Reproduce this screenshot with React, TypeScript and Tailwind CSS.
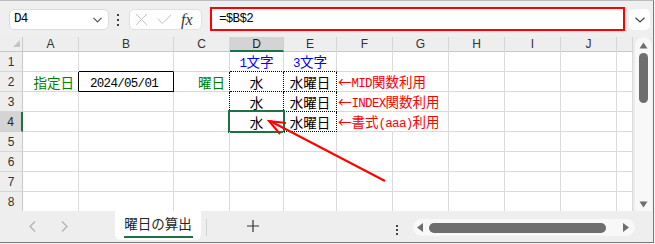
import React from "react";

const CJK = "font-['Noto_Sans_CJK_JP',sans-serif]";
const MONO = "font-['Liberation_Mono',monospace]";

function Rich({ s }: { s: string }) {
  const runs = s.match(/[\x00-\x7f]+|[^\x00-\x7f]+/g) || [];
  return (
    <>
      {runs.map((r, i) =>
        /^[\x00-\x7f]+$/.test(r) ? (
          <span key={i} className={`${MONO} text-[12.5px] tracking-[-0.7px]`}>
            {r}
          </span>
        ) : (
          <span key={i} className={`${CJK} text-[13.5px]`}>
            {r}
          </span>
        )
      )}
    </>
  );
}

const COLS = ["A", "B", "C", "D", "E", "F", "G", "H", "I", "J", ""];

type CellDef = { text: string; cls: string; align: string };

function cellContent(r: number, c: number): CellDef | null {
  const key = `${COLS[c]}${r}`;
  switch (key) {
    case "A2":
      return { text: "指定日", cls: "text-[#008000]", align: "justify-end pr-[4px]" };
    case "B2":
      return { text: "2024/05/01", cls: "text-black", align: "justify-center pr-[4px]" };
    case "C2":
      return { text: "曜日", cls: "text-[#008000]", align: "justify-end pr-[4px]" };
    case "D1":
      return { text: "1文字", cls: "text-[#0000ff]", align: "justify-center" };
    case "E1":
      return { text: "3文字", cls: "text-[#0000ff]", align: "justify-center" };
    case "D2":
    case "D3":
    case "D4":
      return { text: "水", cls: "text-black", align: "justify-center" };
    case "E2":
    case "E3":
    case "E4":
      return { text: "水曜日", cls: "text-black", align: "justify-center" };
    case "F2":
      return { text: "←MID関数利用", cls: "text-[#ff0000]", align: "justify-start pl-[1px]" };
    case "F3":
      return { text: "←INDEX関数利用", cls: "text-[#ff0000]", align: "justify-start pl-[1px]" };
    case "F4":
      return { text: "←書式(aaa)利用", cls: "text-[#ff0000]", align: "justify-start pl-[1px]" };
  }
  return null;
}

function borderCls(r: number, c: number): string {
  const key = `${COLS[c]}${r}`;
  if (["D2", "D3", "D4", "E2", "E3", "E4"].includes(key)) return "border-r border-b border-dotted border-black";
  if (key === "D1" || key === "E1") return "border-r border-b border-r-[#dadada] border-b-black [border-bottom-style:dotted]";
  if (key === "C2" || key === "C3" || key === "C4") return "border-r border-b border-r-black border-b-[#dadada] [border-right-style:dotted]";
  if (key === "F2" || key === "F3" || key === "F4") return "border-r border-b border-r-transparent border-b-[#dadada]";
  if (key === "A2") return "border-r border-b border-r-black border-b-[#dadada]";
  if (key === "B1") return "border-r border-b border-r-[#dadada] border-b-black";
  if (key === "B2") return "border-r border-b border-black";
  return "border-r border-b border-[#dadada]";
}

function Grid() {
  const rows = [1, 2, 3, 4, 5, 6, 7, 8];
  return (
    <div className="grid grid-cols-[23px_56px_95px_56px_54px_53px_56px_56px_56px_56px_56px_16px] grid-rows-[15px_repeat(8,20px)] w-[633px] h-[174px] overflow-hidden bg-white">
      <div className="relative bg-[#eeeeee] border-r border-b border-r-[#c8c8c8] border-b-[#c8c8c8]">
        <svg className="absolute left-[13px] top-[3px]" width="7" height="7" viewBox="0 0 7 7">
          <path d="M7 0 L7 7 L0 7 Z" fill="#c4c4c4" />
        </svg>
      </div>
      {COLS.map((c, i) =>
        c === "D" ? (
          <div
            key={i}
            className="flex items-center justify-center bg-[#d4d4d4] border-r border-r-[#d0d0d0] border-b-2 border-b-[#1e7145] text-[12px] text-[#222] font-['Liberation_Sans',sans-serif] leading-none"
          >
            {c}
          </div>
        ) : (
          <div
            key={i}
            className="flex items-center justify-center bg-[#eeeeee] border-r border-b border-r-[#d6d6d6] border-b-[#c8c8c8] text-[12px] text-[#333] font-['Liberation_Sans',sans-serif] leading-none"
          >
            {c}
          </div>
        )
      )}
      {rows.map((r) => (
        <React.Fragment key={r}>
          {r === 4 ? (
            <div className="flex items-center justify-center bg-[#d4d4d4] border-b border-b-[#d0d0d0] border-r-2 border-r-[#1e7145] text-[12px] text-[#222] font-['Liberation_Sans',sans-serif] leading-none">
              {r}
            </div>
          ) : (
            <div className="flex items-center justify-center bg-[#eeeeee] border-b border-r border-b-[#d6d6d6] border-r-[#c8c8c8] text-[12px] text-[#333] font-['Liberation_Sans',sans-serif] leading-none">
              {r}
            </div>
          )}
          {COLS.map((_, ci) => {
            const content = cellContent(r, ci);
            return (
              <div
                key={ci}
                className={`relative flex items-center whitespace-nowrap leading-none ${borderCls(r, ci)} ${content ? content.align : ""}`}
              >
                {content && (
                  <span className={`${content.cls} leading-none`}>
                    <Rich s={content.text} />
                  </span>
                )}
                {r === 4 && ci === 3 && (
                  <div className="absolute left-[-2px] top-[-2px] right-[-2px] bottom-[-2px] border-2 border-[#1e7145]" />
                )}
              </div>
            );
          })}
        </React.Fragment>
      ))}
    </div>
  );
}

function VScroll() {
  return (
    <div className="w-[20px] h-[174px] bg-[#ececec] flex justify-center pl-[1px]">
      <div className="w-[17px] h-[174px] rounded-t-full bg-[#f8f8f8] flex flex-col items-center pt-[5px]">
        <svg width="9" height="7" viewBox="0 0 9 7">
          <path d="M4.5 0.5 L8.5 6.5 L0.5 6.5 Z" fill="#6e6e6e" />
        </svg>
        <div className="mt-[4px] w-[9px] h-[50px] rounded-full bg-[#6e6e6e]" />
        <div className="flex-1" />
        <svg className="mb-[3px]" width="9" height="7" viewBox="0 0 9 7">
          <path d="M0.5 0.5 L8.5 0.5 L4.5 6.5 Z" fill="#6e6e6e" />
        </svg>
      </div>
    </div>
  );
}

function Toolbar() {
  return (
    <div className="h-[36px] flex items-start bg-[#efefef]">
      <div className="ml-[9px] mt-[8px] w-[100px] h-[21px] bg-white rounded-[5px] border border-[#dcdcdc] flex items-center pl-[4px] pr-[6px]">
        <span className={`${MONO} text-[12.5px] tracking-[-0.7px] text-black leading-none`}>D4</span>
        <div className="flex-1" />
        <svg width="9" height="6" viewBox="0 0 9 6">
          <path d="M0.5 0.8 L4.5 4.8 L8.5 0.8" stroke="#555" strokeWidth="1.2" fill="none" />
        </svg>
      </div>
      <div className="ml-[8px] mt-[13px] flex flex-col gap-[3px]">
        <div className="w-[2px] h-[2px] bg-[#444]" />
        <div className="w-[2px] h-[2px] bg-[#444]" />
        <div className="w-[2px] h-[2px] bg-[#444]" />
      </div>
      <div className="ml-[10px] mt-[8px] w-[73px] h-[21px] bg-white rounded-[5px] border border-[#e0e0e0] flex items-center pl-[5px]">
        <svg width="13" height="13" viewBox="0 0 13 13">
          <path d="M1 1 L12 12 M12 1 L1 12" stroke="#c4c4c4" strokeWidth="1" fill="none" />
        </svg>
        <svg className="ml-[9px]" width="15" height="11" viewBox="0 0 15 11">
          <path d="M1 4.5 L5 9.5 L14 1" stroke="#c4c4c4" strokeWidth="1" fill="none" />
        </svg>
        <span className="ml-[9px] font-['Liberation_Serif',serif] italic text-[16px] text-[#333] leading-none">fx</span>
      </div>
      <div className="ml-[8px] mt-[6px] w-[415px] h-[24px] border-2 border-[#ff0000] bg-white flex items-center pl-[7px]">
        <span className={`${MONO} text-[12.5px] tracking-[-0.7px] text-black leading-none`}>=$B$2</span>
      </div>
      <div className="ml-[4px] mt-[8px] w-[21px] h-[21px] bg-white rounded-[5px] flex items-center justify-center">
        <svg width="10" height="6" viewBox="0 0 10 6">
          <path d="M0.5 0.8 L5 5 L9.5 0.8" stroke="#444" strokeWidth="1.2" fill="none" />
        </svg>
      </div>
    </div>
  );
}

function TabBar() {
  return (
    <div className="h-[31px] bg-[#eeeeee] flex items-start">
      <svg className="ml-[29px] mt-[10px]" width="7" height="11" viewBox="0 0 7 11">
        <path d="M6 0.5 L1 5.5 L6 10.5" stroke="#b0b0b0" strokeWidth="1.2" fill="none" />
      </svg>
      <svg className="ml-[25px] mt-[10px]" width="7" height="11" viewBox="0 0 7 11">
        <path d="M1 0.5 L6 5.5 L1 10.5" stroke="#b0b0b0" strokeWidth="1.2" fill="none" />
      </svg>
      <div className="ml-[47px] w-[86px] h-[29px] bg-white rounded-b-[6px] flex flex-col items-center pt-[6px]">
        <span className={`${CJK} text-[13.5px] text-[#262626] leading-none`}>曜日の算出</span>
        <div className="mt-[5px] w-[69px] h-[2px] bg-[#1e7145]" />
      </div>
      <div className="ml-[5px] mt-[8px] w-[1px] h-[17px] bg-[#d0d0d0]" />
      <svg className="ml-[40px] mt-[9px]" width="12" height="12" viewBox="0 0 12 12">
        <path d="M6 0 L6 12 M0 6 L12 6" stroke="#333" strokeWidth="1.2" fill="none" />
      </svg>
      <div className="ml-[137px] mt-[14px] flex flex-col gap-[2px]">
        <div className="w-[2px] h-[2px] bg-[#444]" />
        <div className="w-[2px] h-[2px] bg-[#444]" />
        <div className="w-[2px] h-[2px] bg-[#444]" />
      </div>
      <div className="ml-[15px] mt-[8px] w-[222px] h-[17px] rounded-full bg-[#f8f8f8] flex items-center px-[4px]">
        <svg width="6" height="9" viewBox="0 0 6 9">
          <path d="M6 0 L0 4.5 L6 9 Z" fill="#6e6e6e" />
        </svg>
        <div className="ml-[6px] w-[177px] h-[10px] rounded-full bg-[#6e6e6e]" />
        <div className="flex-1" />
        <svg width="6" height="9" viewBox="0 0 6 9">
          <path d="M0 0 L6 4.5 L0 9 Z" fill="#6e6e6e" />
        </svg>
        <div className="w-[2px]" />
      </div>
    </div>
  );
}

export default function App() {
  return (
    <div className="relative w-[655px] h-[244px] bg-[#f4f4f4]">
      <div className="w-[654px] h-[243px] flex flex-col border-t border-r border-b border-t-[#bcbcbc] border-r-[#7a7a7a] border-b-[#7a7a7a] bg-[#efefef] overflow-hidden">
        <Toolbar />
        <div className="flex">
          <Grid />
          <VScroll />
        </div>
        <TabBar />
      </div>
      <svg className="absolute left-0 top-0 pointer-events-none" width="655" height="244" viewBox="0 0 655 244">
        <path d="M385 181 L270 121" stroke="#ff0000" strokeWidth="2" fill="none" />
        <path d="M286 123 L269 121 L280 134" stroke="#ff0000" strokeWidth="2" fill="none" />
      </svg>
    </div>
  );
}
